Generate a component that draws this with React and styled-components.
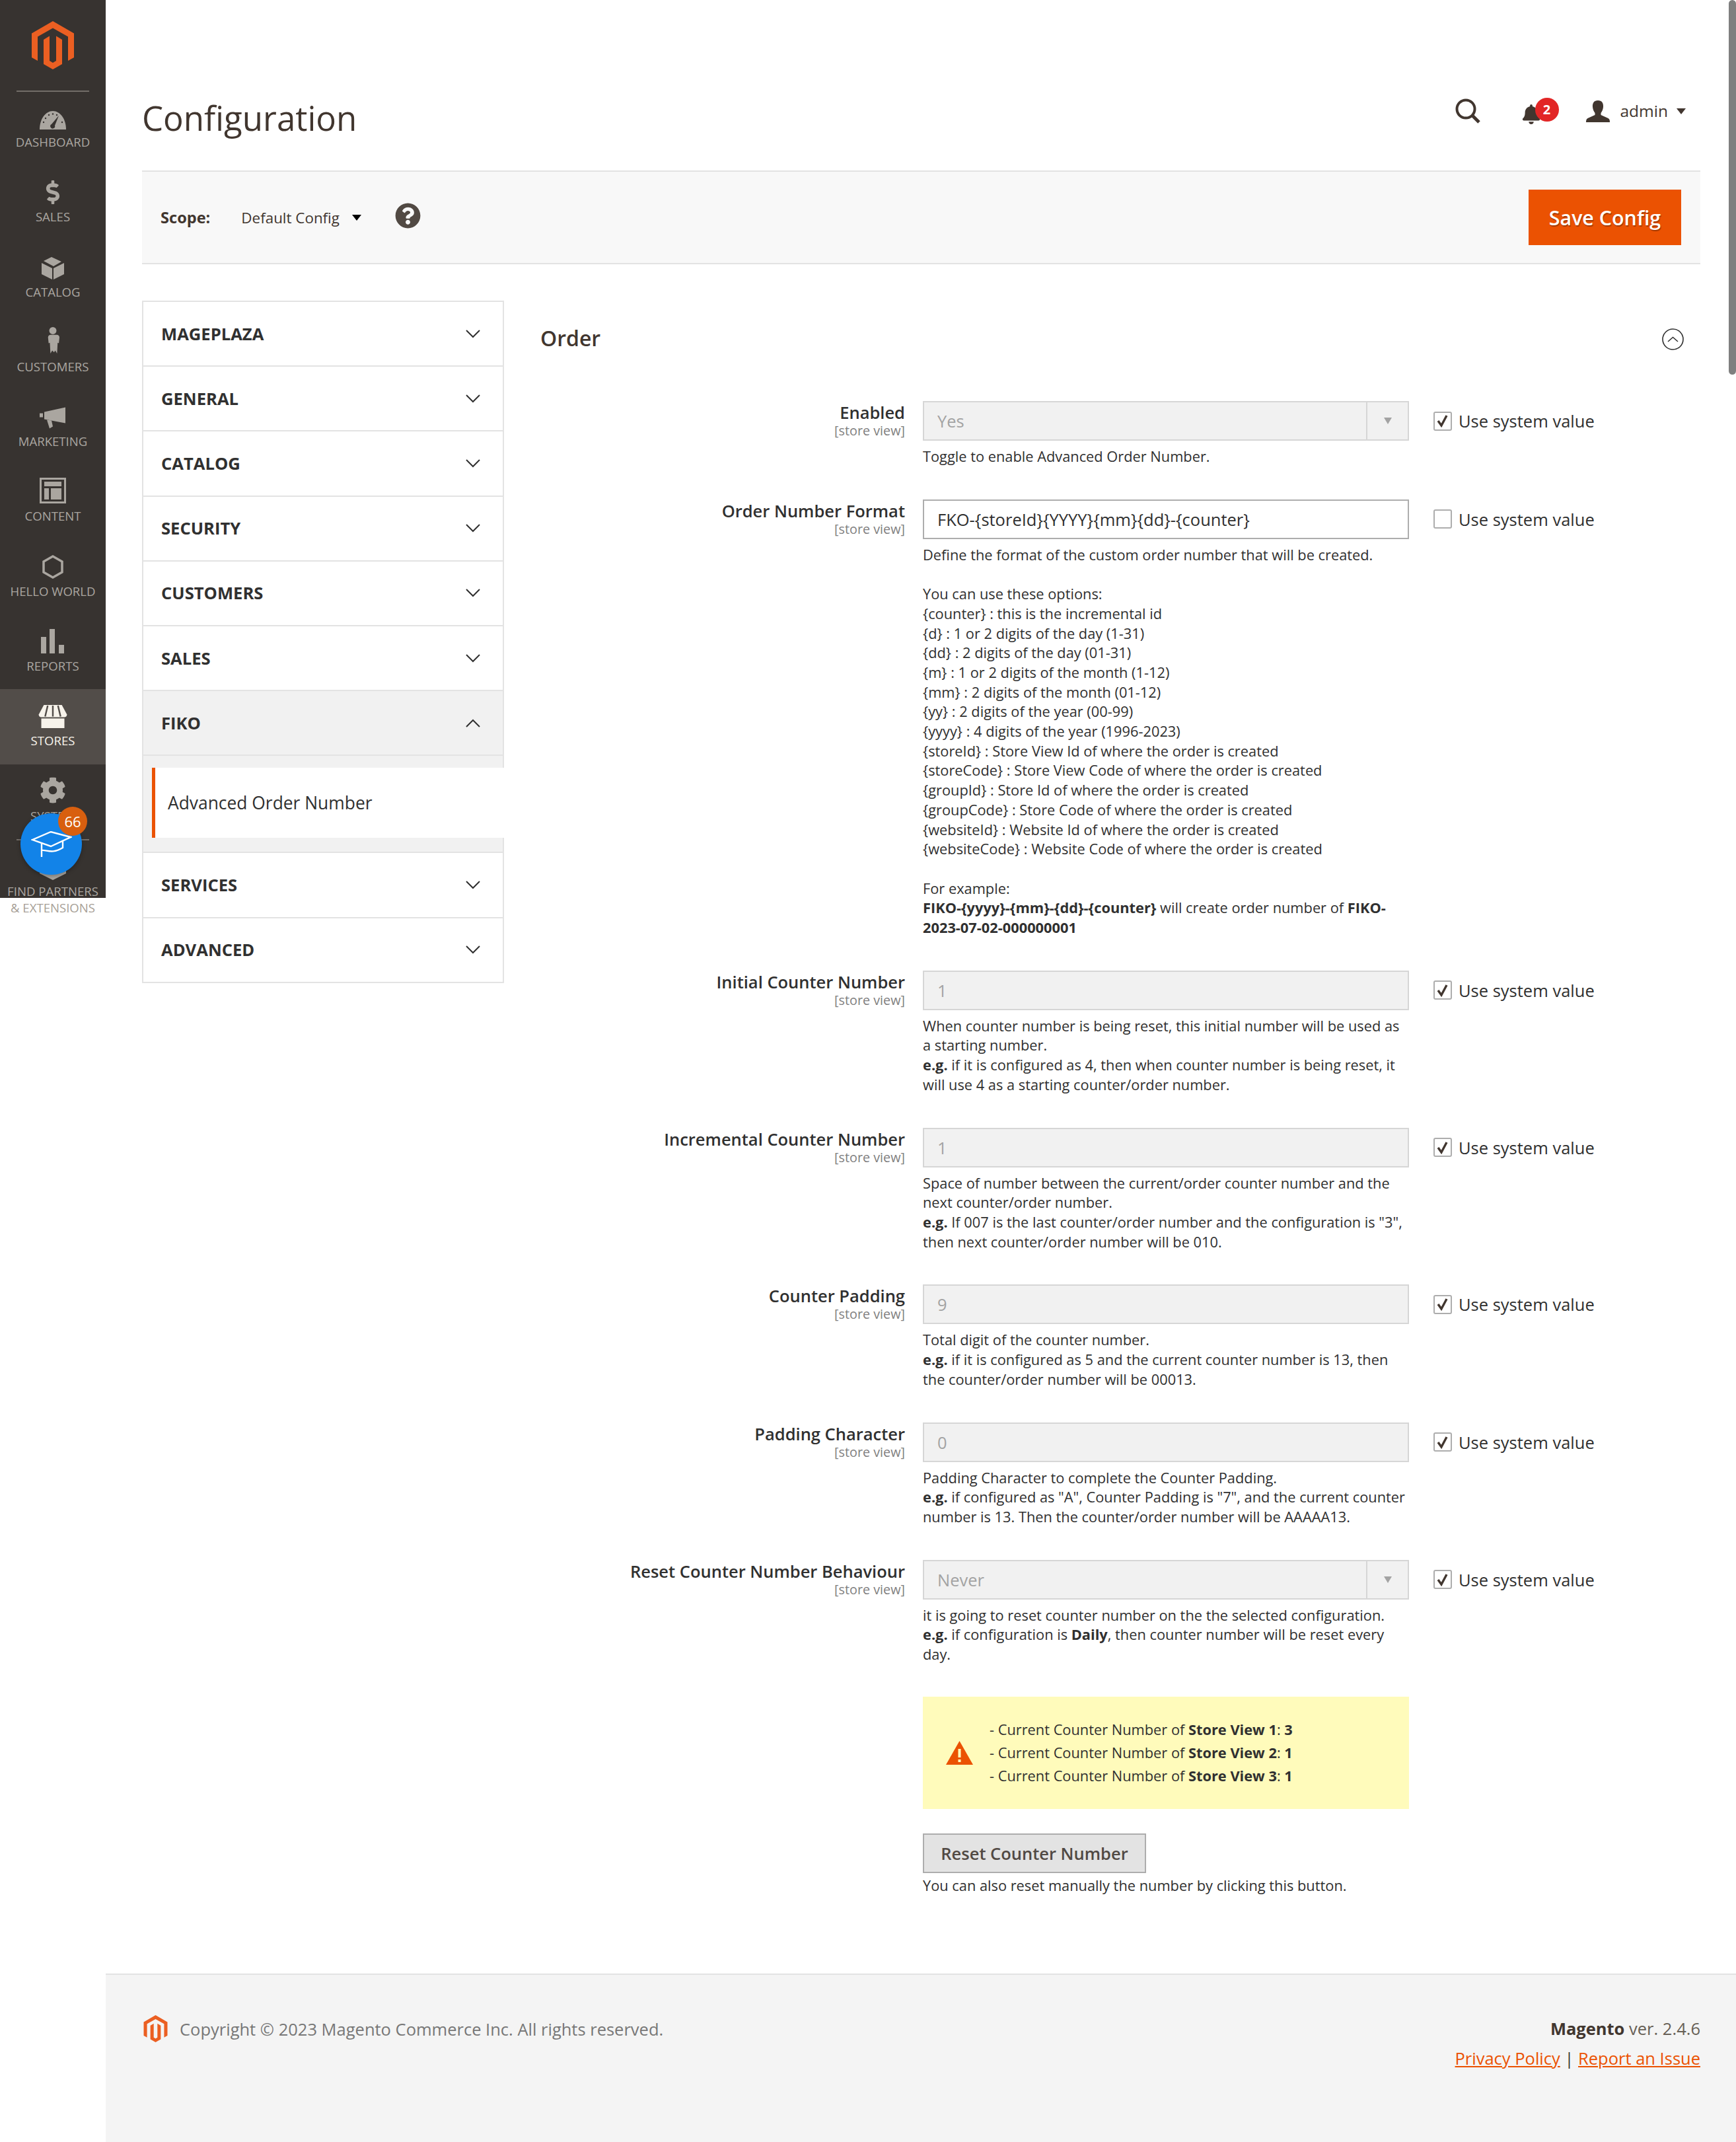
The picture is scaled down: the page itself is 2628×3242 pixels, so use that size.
import React from 'react';
import styled, { createGlobalStyle } from 'styled-components';
import { FaDollarSign, FaCog, FaBell, FaQuestionCircle } from 'react-icons/fa';

const GlobalStyle = createGlobalStyle`
  html, body {
    margin: 0;
    padding: 0;
    background: #fff;
    font-family: "Open Sans", "Liberation Sans", sans-serif;
    color: #303030;
  }
`;

const Page = styled.div`
  position: relative;
  display: flex;
  width: 2628px;
  min-height: 3242px;
  overflow: hidden;
`;

const ScrollThumb = styled.div`
  position: absolute;
  top: 0;
  right: 0;
  width: 11px;
  height: 567px;
  background: #7f7f7f;
  border-radius: 6px;
`;

/* sidebar */
const Sidebar = styled.aside`
  position: relative;
  flex: 0 0 160px;
  height: 1359px;
  background: #373330;
  display: flex;
  flex-direction: column;
`;

const LogoBox = styled.div`
  flex: none;
  height: 139px;
  margin: 0 25px;
  box-sizing: border-box;
  padding-top: 32px;
  display: flex;
  justify-content: center;
  border-bottom: 2px solid #736e69;
`;

const NavItem = styled.div`
  flex: none;
  height: 113.3px;
  box-sizing: border-box;
  margin-top: ${({ $first }) => ($first ? -2 : 0)}px;
  padding-top: 19px;
  display: flex;
  flex-direction: column;
  align-items: center;
  background: ${({ $active }) => ($active ? '#524d49' : 'transparent')};
  color: ${({ $active }) => ($active ? '#f7f3eb' : '#aaa6a0')};
`;

const NavIcon = styled.div`
  height: 40px;
  display: flex;
  align-items: flex-end;
  justify-content: center;
`;

const NavLabel = styled.div`
  margin-top: 7px;
  font-size: 18.6px;
  line-height: 24px;
  text-transform: uppercase;
  white-space: nowrap;
`;

const PartnersBox = styled.div`
  flex: none;
  color: #aaa6a0;
  display: flex;
  flex-direction: column;
  align-items: center;
`;

const PartnersRule = styled.div`
  width: 110px;
  height: 2px;
  background: #736e69;
`;

const PartnersTip = styled.svg`
  margin: 10px 0 4px;
  display: block;
`;

const PartnersLabel = styled.div`
  font-size: 18.6px;
  line-height: 25px;
  text-transform: uppercase;
  white-space: nowrap;
  color: ${({ $light }) => ($light ? '#a79f97' : '#aaa6a0')};
`;

const BlueBubble = styled.div`
  position: absolute;
  left: 31px;
  top: 1231px;
  width: 93px;
  height: 93px;
  border-radius: 50%;
  background: #1283e8;
  box-shadow: 0 2px 6px rgba(0, 0, 0, 0.3);
  display: flex;
  align-items: center;
  justify-content: center;
`;

const BubbleCount = styled.div`
  position: absolute;
  left: 57px;
  top: -10px;
  width: 44px;
  height: 44px;
  border-radius: 50%;
  background: #d85f0f;
  color: #fff;
  font-size: 22px;
  line-height: 44px;
  text-align: center;
`;

/* main column */
const Main = styled.main`
  flex: 1;
  min-width: 0;
  display: flex;
  flex-direction: column;
`;

const Content = styled.div`
  padding: 0 54px 0 55px;
`;

const Header = styled.header`
  height: 258px;
  display: flex;
  justify-content: space-between;
  align-items: flex-start;
`;

const Title = styled.h1`
  margin: 147px 0 0;
  font-size: 51px;
  line-height: 62px;
  font-weight: 400;
  color: #41362f;
`;

const HeaderActions = styled.div`
  display: flex;
  align-items: center;
  height: 40px;
  margin-top: 148px;
  padding-right: 22px;
  color: #41362f;
`;

const BellWrap = styled.div`
  position: relative;
  width: 57px;
  height: 40px;
  margin: 0 41px 0 62px;
  display: flex;
  align-items: flex-end;
`;

const BellBadge = styled.div`
  position: absolute;
  left: 21px;
  top: 0;
  width: 36px;
  height: 36px;
  border-radius: 50%;
  background: #e22626;
  color: #fff;
  font-size: 20px;
  font-weight: 700;
  line-height: 36px;
  text-align: center;
`;

const UserName = styled.span`
  margin: 0 13px 0 16px;
  font-size: 24.5px;
  line-height: 40px;
`;

const Caret = styled.span`
  display: inline-block;
  flex: none;
  width: 0;
  height: 0;
  border-left: ${({ $w }) => $w}px solid transparent;
  border-right: ${({ $w }) => $w}px solid transparent;
  border-top: ${({ $h }) => $h}px solid ${({ $c }) => $c};
`;

const ActionBar = styled.div`
  height: 142px;
  box-sizing: border-box;
  padding: 0 29px 0 28px;
  display: flex;
  align-items: center;
  background: #f8f8f8;
  border-top: 2px solid #e3e3e3;
  border-bottom: 2px solid #e3e3e3;
`;

const ScopeLabel = styled.span`
  font-size: 23.6px;
  font-weight: 700;
  color: #41362f;
`;

const ScopeValue = styled.span`
  margin: 0 19px 0 47px;
  font-size: 22.4px;
  color: #41362f;
`;

const HelpIcon = styled.span`
  display: inline-flex;
  margin: -6px auto 0 51px;
  color: #514943;
`;

const SaveButton = styled.button`
  width: 231px;
  height: 84px;
  padding: 0;
  border: 0;
  background: #eb5202;
  color: #fff;
  font-family: inherit;
  font-size: 30.4px;
  font-weight: 600;
  text-shadow: 1px 2px 1px rgba(0, 0, 0, 0.3);
`;

const Columns = styled.div`
  display: flex;
  align-items: flex-start;
  margin-top: 55px;
`;

/* left tabs */
const Tabs = styled.nav`
  flex: 0 0 548px;
  border-top: 2px solid #e3e3e3;
  margin-right: 55px;
`;

const TabRow = styled.div`
  height: 98.2px;
  box-sizing: border-box;
  padding: 0 34px 0 27px;
  display: flex;
  align-items: center;
  justify-content: space-between;
  border: 2px solid #e3e3e3;
  border-top: 0;
  background: ${({ $open }) => ($open ? '#f1f1f1' : '#fff')};
`;

const TabTitle = styled.span`
  font-size: 25.6px;
  font-weight: 700;
  color: #303030;
`;

const SubGroup = styled.div`
  padding: 18px 0 21px 13px;
  background: #f1f1f1;
  border: 2px solid #e3e3e3;
  border-width: 0 2px 2px 2px;
`;

const SubItem = styled.div`
  height: 106px;
  box-sizing: border-box;
  margin-right: -2px;
  padding-left: 19px;
  display: flex;
  align-items: center;
  background: #fff;
  border-left: 5px solid #eb5202;
  font-size: 26.4px;
  font-weight: 500;
  color: #303030;
`;

/* config form */
const Section = styled.section`
  flex: 1;
  min-width: 0;
`;

const SectionHead = styled.div`
  height: 152px;
  box-sizing: border-box;
  padding: 35px 25px 0 0;
  display: flex;
  justify-content: space-between;
  align-items: flex-start;
`;

const SectionTitle = styled.h2`
  margin: 0;
  font-size: 32px;
  line-height: 44px;
  font-weight: 600;
  color: #41362f;
`;

const CollapseIcon = styled.svg`
  margin-top: 7px;
`;

const FieldRow = styled.div`
  display: grid;
  grid-template-columns: 552px 736px auto;
  column-gap: 27px;
  margin-bottom: 50px;
`;

const FieldLabel = styled.div`
  text-align: right;
  font-size: 25.5px;
  line-height: 34px;
  font-weight: 600;
  color: #303030;
`;

const FieldScope = styled.div`
  font-size: 19.8px;
  line-height: 22px;
  font-weight: 400;
  color: #808080;
`;

const InputBox = styled.div`
  height: 60px;
  box-sizing: border-box;
  padding-left: 20px;
  display: flex;
  align-items: center;
  font-size: 25.5px;
  border: 2px solid ${({ $disabled }) => ($disabled ? '#d6d6d6' : '#adadad')};
  background: ${({ $disabled }) => ($disabled ? '#f1f1f1' : '#fff')};
  color: ${({ $disabled }) => ($disabled ? '#a3a3a3' : '#303030')};
`;

const SelectText = styled.span`
  flex: 1;
`;

const SelectArrow = styled.span`
  align-self: stretch;
  width: 61px;
  display: flex;
  align-items: center;
  justify-content: center;
  border-left: 2px solid #d6d6d6;
`;

const Note = styled.div`
  margin-top: 9px;
  font-size: 21.8px;
  line-height: 29.7px;
  color: #303030;
`;

const SystemCheck = styled.div`
  height: 60px;
  margin-left: 10px;
  display: flex;
  align-items: center;
  font-size: 25.5px;
  color: #303030;
`;

const CheckBox = styled.span`
  width: 28px;
  height: 29px;
  box-sizing: border-box;
  margin-right: 10px;
  display: flex;
  align-items: center;
  justify-content: center;
  background: #fff;
  border: 2px solid #adadad;
  border-radius: 3px;
`;

const ExtraBlock = styled.div`
  margin-left: 579px;
  width: 736px;
  margin-top: ${({ $top }) => $top}px;
`;

const Warning = styled.div`
  height: 170px;
  box-sizing: border-box;
  padding-left: 35px;
  display: flex;
  align-items: center;
  background: #fffbbb;
  font-size: 21.8px;
  line-height: 35px;
`;

const WarningText = styled.div`
  margin-left: 25px;
`;

const ResetButton = styled.button`
  display: block;
  width: 338px;
  height: 60px;
  padding: 0;
  background: #e3e3e3;
  border: 2px solid #adadad;
  color: #514943;
  font-family: inherit;
  font-size: 25.5px;
  font-weight: 600;
`;

const ResetNote = styled.div`
  margin-top: 4px;
  font-size: 21.8px;
  line-height: 29.7px;
`;

/* footer */
const Footer = styled.footer`
  margin-top: auto;
  height: 255px;
  box-sizing: border-box;
  padding: 61px 54px 0 57px;
  display: flex;
  justify-content: space-between;
  align-items: flex-start;
  background: #f4f4f4;
  border-top: 2px solid #e3e3e3;
`;

const Copyright = styled.div`
  display: flex;
  align-items: center;
  color: #777;
  font-size: 25.5px;
  line-height: 40px;
  gap: 18px;
`;

const Version = styled.div`
  text-align: right;
  font-size: 25.5px;
  line-height: 40px;
  color: #676056;
  strong { font-weight: 700; color: #41362f; }
`;

const Links = styled.div`
  margin-top: 5px;
  color: #41362f;
  a { color: #eb5202; text-decoration: underline; }
`;

function MagentoLogo({ width, height }) {
  return (
    <svg width={width} height={height} viewBox="0 0 64 73" fill="#eb5f22">
      <polygon points="32,0 64,18.5 64,55 55,60 55,23.5 32,10.5 9,23.5 9,60 0,55 0,18.5" />
      <polygon points="18,28 27,22.5 27,60 32,63 37,60 37,22.5 46,28 46,65 32,73 18,65" />
    </svg>
  );
}

const navItems = [
  {
    label: 'Dashboard',
    icon: (
      <svg width="40" height="28" viewBox="0 0 40 28">
        <path d="M0 28C0 12 9 0 20 0s20 12 20 28Z" fill="currentColor" />
        <g fill="#373330">
          <circle cx="6" cy="17" r="1.2" /><circle cx="9" cy="11" r="1.2" /><circle cx="14" cy="6" r="1.2" />
          <circle cx="20" cy="4.5" r="1.2" /><circle cx="26" cy="6" r="1.2" /><circle cx="34" cy="17" r="1.2" />
          <path d="M29 7 23 22a3.5 3.5 0 1 1-5-2Z" />
        </g>
      </svg>
    ),
  },
  { label: 'Sales', icon: <FaDollarSign size={36} /> },
  {
    label: 'Catalog',
    icon: (
      <svg width="34" height="36" viewBox="0 0 34 36" fill="currentColor">
        <polygon points="0,11 16,19 16,36 0,28" />
        <polygon points="18,19 34,11 34,28 18,36" />
        <polygon points="3,8 15,2 30,9 18,16" />
      </svg>
    ),
  },
  {
    label: 'Customers',
    icon: (
      <svg width="20" height="42" viewBox="0 0 22 44" fill="currentColor">
        <circle cx="11" cy="6" r="6" />
        <path d="M4 13h14c2 0 4 2 4 4l-1 10-2-1-1 18-3-5-2 3-3-3-3 5-1-18-2 1-1-10c0-2 2-4 4-4Z" />
      </svg>
    ),
  },
  {
    label: 'Marketing',
    icon: (
      <svg width="40" height="33" viewBox="0 0 40 32" fill="currentColor">
        <polygon points="0,9 5,9 5,15 0,15" />
        <polygon points="7,7 39,0 39,24 7,18" />
        <polygon points="11,19 18,20 20,29 15,32" />
      </svg>
    ),
  },
  {
    label: 'Content',
    icon: (
      <svg width="40" height="39" viewBox="0 0 40 39" fill="currentColor">
        <path d="M0 0h40v39H0Zm3 3v33h34V3Z" fillRule="evenodd" />
        <rect x="7" y="6" width="26" height="7" />
        <rect x="7" y="16" width="7" height="17" />
        <rect x="17" y="16" width="16" height="17" />
      </svg>
    ),
  },
  {
    label: 'Hello World',
    icon: (
      <svg width="32" height="36" viewBox="0 0 32 36" fill="none" stroke="currentColor" strokeWidth="3.5">
        <polygon points="16,2 30,10 30,26 16,34 2,26 2,10" />
      </svg>
    ),
  },
  {
    label: 'Reports',
    icon: (
      <svg width="36" height="37" viewBox="0 0 36 37" fill="currentColor">
        <rect x="0" y="12" width="8" height="25" />
        <rect x="13" y="0" width="8" height="37" />
        <rect x="27" y="24" width="8" height="13" />
      </svg>
    ),
  },
  {
    label: 'Stores',
    active: true,
    icon: (
      <svg width="44" height="35" viewBox="0 0 44 36" fill="currentColor">
        <path d="M8 0h28l8 15c0 3-2 4-4 4H4c-2 0-4-1-4-4Z" />
        <rect x="4" y="21" width="36" height="15" />
        <path d="M14 1 10 18M22 1v17M30 1l4 17" stroke="#524d49" strokeWidth="2.5" />
      </svg>
    ),
  },
  { label: 'System', icon: <FaCog size={40} /> },
];

const orderHelp = [
  'You can use these options:',
  '{counter} : this is the incremental id',
  '{d} : 1 or 2 digits of the day (1-31)',
  '{dd} : 2 digits of the day (01-31)',
  '{m} : 1 or 2 digits of the month (1-12)',
  '{mm} : 2 digits of the month (01-12)',
  '{yy} : 2 digits of the year (00-99)',
  '{yyyy} : 4 digits of the year (1996-2023)',
  '{storeId} : Store View Id of where the order is created',
  '{storeCode} : Store View Code of where the order is created',
  '{groupId} : Store Id of where the order is created',
  '{groupCode} : Store Code of where the order is created',
  '{websiteId} : Website Id of where the order is created',
  '{websiteCode} : Website Code of where the order is created',
];

function Chevron({ up }) {
  return (
    <svg width="22" height="13" viewBox="0 0 22 13" fill="none" stroke="#303030" strokeWidth="2">
      <path d={up ? 'M1 12 11 2l10 10' : 'M1 1l10 10L21 1'} />
    </svg>
  );
}

function UseSystem({ checked }) {
  return (
    <SystemCheck>
      <CheckBox>
        {checked && (
          <svg width="18" height="20" viewBox="0 0 18 20" fill="none" stroke="#41362f" strokeWidth="3.4">
            <path d="M2 10l5 7L15 2" />
          </svg>
        )}
      </CheckBox>
      Use system value
    </SystemCheck>
  );
}

function Field({ label, value, disabled = true, select, checked = true, children }) {
  return (
    <FieldRow>
      <FieldLabel>
        {label}
        <FieldScope>[store view]</FieldScope>
      </FieldLabel>
      <div>
        <InputBox $disabled={disabled}>
          <SelectText>{value}</SelectText>
          {select && (
            <SelectArrow>
              <Caret $w={6} $h={10} $c="#a3a3a3" />
            </SelectArrow>
          )}
        </InputBox>
        <Note>{children}</Note>
      </div>
      <UseSystem checked={checked} />
    </FieldRow>
  );
}

function App() {
  const closedTop = ['MAGEPLAZA', 'GENERAL', 'CATALOG', 'SECURITY', 'CUSTOMERS', 'SALES'];
  return (
    <Page>
      <GlobalStyle />
      <Sidebar>
        <LogoBox>
          <MagentoLogo width={64} height={73} />
        </LogoBox>
        {navItems.map((item, i) => (
          <NavItem key={item.label} $active={item.active} $first={i === 0}>
            <NavIcon>{item.icon}</NavIcon>
            <NavLabel>{item.label}</NavLabel>
          </NavItem>
        ))}
        <PartnersBox>
          <PartnersRule />
          <PartnersTip width="40" height="50" viewBox="0 0 40 50" fill="currentColor">
            <polygon points="20,0 40,10 40,40 20,50 0,40 0,10" />
          </PartnersTip>
          <PartnersLabel>Find Partners</PartnersLabel>
          <PartnersLabel $light>&amp; Extensions</PartnersLabel>
        </PartnersBox>
        <BlueBubble>
          <svg width="62" height="40" viewBox="0 0 62 40" fill="none" stroke="#fff" strokeWidth="2.4">
            <path d="M2 13 30 1l30 8-30 14Z" />
            <path d="M16 17v22M16 29c8-1 16 6 32-4V15" />
          </svg>
          <BubbleCount>66</BubbleCount>
        </BlueBubble>
      </Sidebar>

      <Main>
        <Content>
          <Header>
            <Title>Configuration</Title>
            <HeaderActions>
              <svg width="38" height="38" viewBox="0 0 38 38" fill="none" stroke="#41362f">
                <circle cx="16" cy="16" r="13.5" strokeWidth="4" />
                <path d="M25 25 36 36" strokeWidth="5" />
              </svg>
              <BellWrap>
                <FaBell size={30} />
                <BellBadge>2</BellBadge>
              </BellWrap>
              <svg width="36" height="33" viewBox="0 0 36 33" fill="#41362f">
                <path d="M18 0c6 0 8.500 4 8 10-.3 4-2 7-3.500 9v3l11 5c2 1 2.500 3 2.500 6H0c0-3 .5-5 2.500-6l11-5v-3c-1.500-2-3.200-5-3.500-9-.5-6 2-10 8-10Z" />
              </svg>
              <UserName>admin</UserName>
              <Caret $w={7.5} $h={9} $c="#41362f" />
            </HeaderActions>
          </Header>

          <ActionBar>
            <ScopeLabel>Scope:</ScopeLabel>
            <ScopeValue>Default Config</ScopeValue>
            <Caret $w={7} $h={9} $c="#000" />
            <HelpIcon>
              <FaQuestionCircle size={39} />
            </HelpIcon>
            <SaveButton>Save Config</SaveButton>
          </ActionBar>

          <Columns>
            <Tabs>
              {closedTop.map((t) => (
                <TabRow key={t}>
                  <TabTitle>{t}</TabTitle>
                  <Chevron />
                </TabRow>
              ))}
              <TabRow $open>
                <TabTitle>FIKO</TabTitle>
                <Chevron up />
              </TabRow>
              <SubGroup>
                <SubItem>Advanced Order Number</SubItem>
              </SubGroup>
              <TabRow>
                <TabTitle>SERVICES</TabTitle>
                <Chevron />
              </TabRow>
              <TabRow>
                <TabTitle>ADVANCED</TabTitle>
                <Chevron />
              </TabRow>
            </Tabs>

            <Section>
              <SectionHead>
                <SectionTitle>Order</SectionTitle>
                <CollapseIcon width="33" height="33" viewBox="0 0 33 33" fill="none" stroke="#303030" strokeWidth="1.6">
                  <circle cx="16.5" cy="16.5" r="15.5" />
                  <path d="M9 20l7.5-6.5L24 20" />
                </CollapseIcon>
              </SectionHead>

              <Field label="Enabled" value="Yes" select>
                Toggle to enable Advanced Order Number.
              </Field>

              <Field label="Order Number Format" value="FKO-{storeId}{YYYY}{mm}{dd}-{counter}" disabled={false} checked={false}>
                Define the format of the custom order number that will be created.
                <br />
                <br />
                {orderHelp.map((line) => (
                  <div key={line}>{line}</div>
                ))}
                <br />
                For example:
                <br />
                <b>FIKO-{'{yyyy}'}-{'{mm}'}-{'{dd}'}-{'{counter}'}</b> will create order number of{' '}
                <b>FIKO-2023-07-02-000000001</b>
              </Field>

              <Field label="Initial Counter Number" value="1">
                When counter number is being reset, this initial number will be used as a starting number.
                <br />
                <b>e.g.</b> if it is configured as 4, then when counter number is being reset, it will use 4 as a starting counter/order number.
              </Field>

              <Field label="Incremental Counter Number" value="1">
                Space of number between the current/order counter number and the next counter/order number.
                <br />
                <b>e.g.</b> If 007 is the last counter/order number and the configuration is "3", then next counter/order number will be 010.
              </Field>

              <Field label="Counter Padding" value="9">
                Total digit of the counter number.
                <br />
                <b>e.g.</b> if it is configured as 5 and the current counter number is 13, then the counter/order number will be 00013.
              </Field>

              <Field label="Padding Character" value="0">
                Padding Character to complete the Counter Padding.
                <br />
                <b>e.g.</b> if configured as "A", Counter Padding is "7", and the current counter number is 13. Then the counter/order number will be AAAAA13.
              </Field>

              <Field label="Reset Counter Number Behaviour" value="Never" select>
                it is going to reset counter number on the the selected configuration.
                <br />
                <b>e.g.</b> if configuration is <b>Daily</b>, then counter number will be reset every day.
              </Field>

              <ExtraBlock $top={-1}>
                <Warning>
                  <svg width="41" height="36" viewBox="0 0 41 36">
                    <polygon points="20.5,0 41,36 0,36" fill="#eb5202" />
                    <rect x="18.5" y="12" width="4" height="13" fill="#fffbbb" />
                    <rect x="18.5" y="28" width="4" height="4" fill="#fffbbb" />
                  </svg>
                  <WarningText>
                    <div>- Current Counter Number of <b>Store View 1</b>: <b>3</b></div>
                    <div>- Current Counter Number of <b>Store View 2</b>: <b>1</b></div>
                    <div>- Current Counter Number of <b>Store View 3</b>: <b>1</b></div>
                  </WarningText>
                </Warning>
              </ExtraBlock>
              <ExtraBlock $top={37}>
                <ResetButton>Reset Counter Number</ResetButton>
                <ResetNote>You can also reset manually the number by clicking this button.</ResetNote>
              </ExtraBlock>
            </Section>
          </Columns>
        </Content>

        <Footer>
          <Copyright>
            <MagentoLogo width={37} height={41} />
            Copyright © 2023 Magento Commerce Inc. All rights reserved.
          </Copyright>
          <Version>
            <strong>Magento</strong> ver. 2.4.6
            <Links>
              <a>Privacy Policy</a> | <a>Report an Issue</a>
            </Links>
          </Version>
        </Footer>
      </Main>
      <ScrollThumb />
    </Page>
  );
}

export default App;
